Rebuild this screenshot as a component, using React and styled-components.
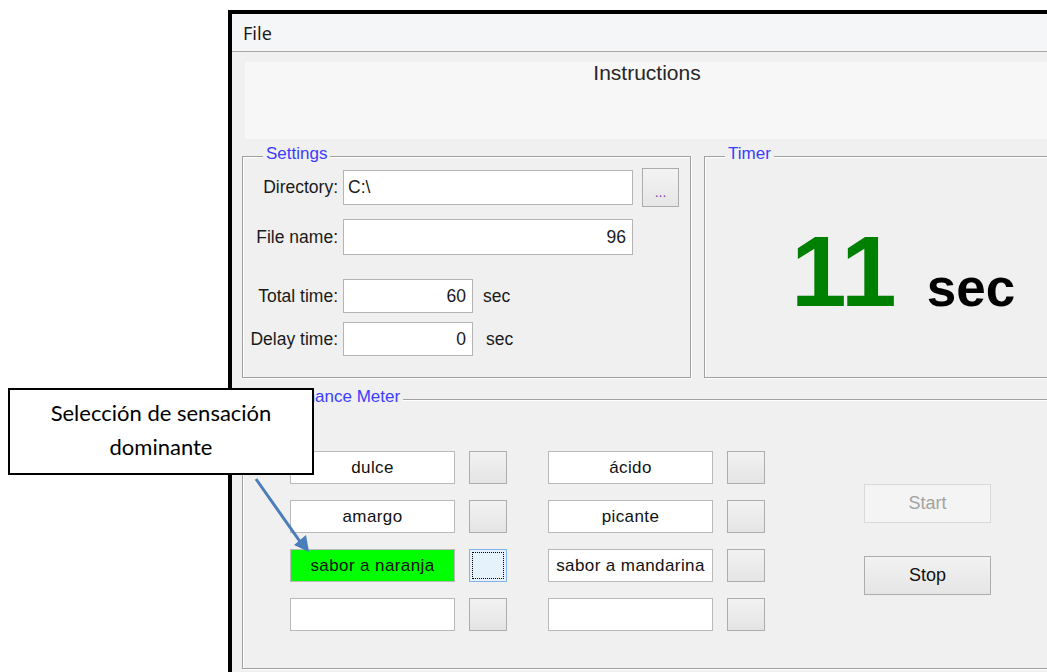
import React from 'react';
import styled, { createGlobalStyle } from 'styled-components';

const GlobalStyle = createGlobalStyle`
  html, body {
    margin: 0;
    padding: 0;
    background: #ffffff;
    overflow: hidden;
  }
`;

const Page = styled.div`
  position: relative;
  width: 1047px;
  height: 672px;
  overflow: hidden;
  background: #ffffff;
  font-family: "Liberation Sans", Arial, sans-serif;
`;

const Window = styled.div`
  margin: 10px 0 0 228px;
  width: 860px;
  height: 662px;
  box-sizing: border-box;
  border-top: 4px solid #000;
  border-left: 4px solid #000;
  background: #f0f0f0;
  display: flex;
  flex-direction: column;
`;

const MenuBar = styled.div`
  height: 37px;
  flex-shrink: 0;
  display: flex;
  align-items: center;
  padding-left: 11px;
  background: #f5f6f7;
  border-bottom: 1px solid #a8a8a8;
  font-family: "Noto Sans", "Liberation Sans", sans-serif;
  font-size: 18px;
  color: #1b1b1b;
`;

const WindowBody = styled.div`
  display: flex;
  flex-direction: column;
  padding: 10px 0 0 10px;
`;

const Instructions = styled.div`
  margin-left: 3px;
  width: 804px;
  height: 77px;
  background: #f7f7f7;
  text-align: center;
  font-size: 21px;
  line-height: 22px;
  color: #262626;
`;

const TopRow = styled.div`
  display: flex;
  gap: 13px;
  margin-top: 17px;
`;

const Group = styled.div`
  position: relative;
  box-sizing: border-box;
  width: ${p => p.$width}px;
  height: ${p => p.$height}px;
  border: 1px solid #a0a0a0;
  box-shadow: inset 1px 1px 0 #ffffff, 1px 1px 0 #ffffff;
`;

const Caption = styled.span`
  position: absolute;
  top: -13px;
  left: 20px;
  padding: 0 3px;
  background: #f0f0f0;
  font-size: 17px;
  line-height: 20px;
  color: #3c3cff;
`;

const Field = styled.div`
  display: flex;
  align-items: center;
  margin-top: ${p => p.$top}px;
`;

const Label = styled.span`
  width: 95px;
  flex-shrink: 0;
  text-align: right;
  font-size: 17.5px;
  color: #1a1a1a;
`;

const TextInput = styled.div`
  box-sizing: border-box;
  margin-left: 5px;
  width: ${p => p.$width}px;
  height: ${p => p.$height}px;
  display: flex;
  align-items: center;
  justify-content: ${p => (p.$right ? 'flex-end' : 'flex-start')};
  padding: 0 6px 0 4px;
  background: #ffffff;
  border: 1px solid #b4b4b4;
  font-size: 17.5px;
  color: #1a1a1a;
`;

const BrowseButton = styled.div`
  box-sizing: border-box;
  margin-left: 9px;
  width: 37px;
  height: 39px;
  display: flex;
  align-items: flex-end;
  justify-content: center;
  padding-bottom: 9px;
  background: linear-gradient(#f3f3f3, #e6e6e6);
  border: 1px solid #acacac;
  font-size: 14px;
  line-height: 10px;
  color: #7a3fa0;
`;

const Unit = styled.span`
  margin-left: ${p => p.$gap}px;
  font-size: 17.5px;
  color: #1a1a1a;
`;

const TimerDisplay = styled.div`
  display: flex;
  align-items: baseline;
  padding: 64px 0 0 86px;
  font-weight: bold;
`;

const TimerValue = styled.span`
  font-size: 100px;
  line-height: 100px;
  color: #008000;
`;

const TimerUnit = styled.span`
  margin-left: 30px;
  font-size: 53px;
  color: #000;
`;

const MeterGroup = styled(Group)`
  margin-top: 21px;
`;

const MeterBody = styled.div`
  display: flex;
  align-items: flex-start;
  padding: 51px 0 0 47px;
`;

const SensationColumn = styled.div`
  display: flex;
  flex-direction: column;
  gap: 16px;
  margin-right: ${p => p.$gap}px;
`;

const SensationRow = styled.div`
  display: flex;
  gap: 14px;
`;

const SensationBox = styled.div`
  box-sizing: border-box;
  width: 165px;
  height: 33px;
  display: flex;
  align-items: center;
  justify-content: center;
  background: ${p => (p.$active ? '#00ff00' : '#ffffff')};
  border: 1px solid #b9b9b9;
  font-size: 17px;
  letter-spacing: 0.4px;
  color: #111;
  white-space: nowrap;
`;

const PickButton = styled.div`
  box-sizing: border-box;
  width: 38px;
  height: 33px;
  background: ${p =>
    p.$focused ? '#e5f1fb' : 'linear-gradient(#f2f2f2, #e4e4e4)'};
  border: 1px solid ${p => (p.$focused ? '#7eb4ea' : '#adadad')};
  outline: ${p => (p.$focused ? '1px dotted #000' : 'none')};
  outline-offset: -4px;
`;

const ButtonStack = styled.div`
  display: flex;
  flex-direction: column;
  gap: 33px;
  margin-top: 33px;
`;

const ActionButton = styled.div`
  box-sizing: border-box;
  width: 127px;
  height: 39px;
  display: flex;
  align-items: center;
  justify-content: center;
  font-size: 18px;
  background: ${p => (p.$disabled ? '#f4f4f4' : 'linear-gradient(#f2f2f2, #e5e5e5)')};
  border: 1px solid ${p => (p.$disabled ? '#d9d9d9' : '#adadad')};
  color: ${p => (p.$disabled ? '#a3a3a3' : '#111')};
`;

const Callout = styled.div`
  position: absolute;
  left: 8px;
  top: 388px;
  width: 306px;
  height: 87px;
  box-sizing: border-box;
  border: 2px solid #000;
  background: #fff;
  display: flex;
  flex-direction: column;
  align-items: center;
  justify-content: center;
  padding-bottom: 4px;
  font-family: Lato, "Open Sans", sans-serif;
  font-size: 22px;
  line-height: 34px;
  color: #000;
`;

const Pointer = styled.svg`
  position: absolute;
  left: 0;
  top: 0;
  pointer-events: none;
`;

const leftColumn = [
  { label: 'dulce' },
  { label: 'amargo' },
  { label: 'sabor a naranja', active: true, focused: true },
  { label: '' },
];

const rightColumn = [
  { label: 'ácido' },
  { label: 'picante' },
  { label: 'sabor a mandarina' },
  { label: '' },
];

function Sensations({ items, gap }) {
  return (
    <SensationColumn $gap={gap}>
      {items.map((item, i) => (
        <SensationRow key={i}>
          <SensationBox $active={item.active}>{item.label}</SensationBox>
          <PickButton $focused={item.focused} />
        </SensationRow>
      ))}
    </SensationColumn>
  );
}

export default function App() {
  return (
    <Page>
      <GlobalStyle />
      <Window>
        <MenuBar>File</MenuBar>
        <WindowBody>
          <Instructions>Instructions</Instructions>

          <TopRow>
            <Group $width={449} $height={222}>
              <Caption>Settings</Caption>
              <Field $top={11}>
                <Label>Directory:</Label>
                <TextInput $width={290} $height={35}>C:\</TextInput>
                <BrowseButton>...</BrowseButton>
              </Field>
              <Field $top={12}>
                <Label>File name:</Label>
                <TextInput $width={290} $height={36} $right>96</TextInput>
              </Field>
              <Field $top={24}>
                <Label>Total time:</Label>
                <TextInput $width={130} $height={34} $right>60</TextInput>
                <Unit $gap={10}>sec</Unit>
              </Field>
              <Field $top={9}>
                <Label>Delay time:</Label>
                <TextInput $width={130} $height={34} $right>0</TextInput>
                <Unit $gap={13}>sec</Unit>
              </Field>
            </Group>

            <Group $width={380} $height={222}>
              <Caption>Timer</Caption>
              <TimerDisplay>
                <TimerValue>11</TimerValue>
                <TimerUnit>sec</TimerUnit>
              </TimerDisplay>
            </Group>
          </TopRow>

          <MeterGroup $width={840} $height={270}>
            <Caption>Dominance Meter</Caption>
            <MeterBody>
              <Sensations items={leftColumn} gap={41} />
              <Sensations items={rightColumn} gap={99} />
              <ButtonStack>
                <ActionButton $disabled>Start</ActionButton>
                <ActionButton>Stop</ActionButton>
              </ButtonStack>
            </MeterBody>
          </MeterGroup>
        </WindowBody>
      </Window>

      <Callout>
        <span>Selección de sensación</span>
        <span>dominante</span>
      </Callout>

      <Pointer width="1047" height="672" viewBox="0 0 1047 672">
        <line x1="256" y1="479" x2="301" y2="543" stroke="#4a7ebb" strokeWidth="3" />
        <polygon points="309,552 294,545 306,535" fill="#4a7ebb" />
      </Pointer>
    </Page>
  );
}
